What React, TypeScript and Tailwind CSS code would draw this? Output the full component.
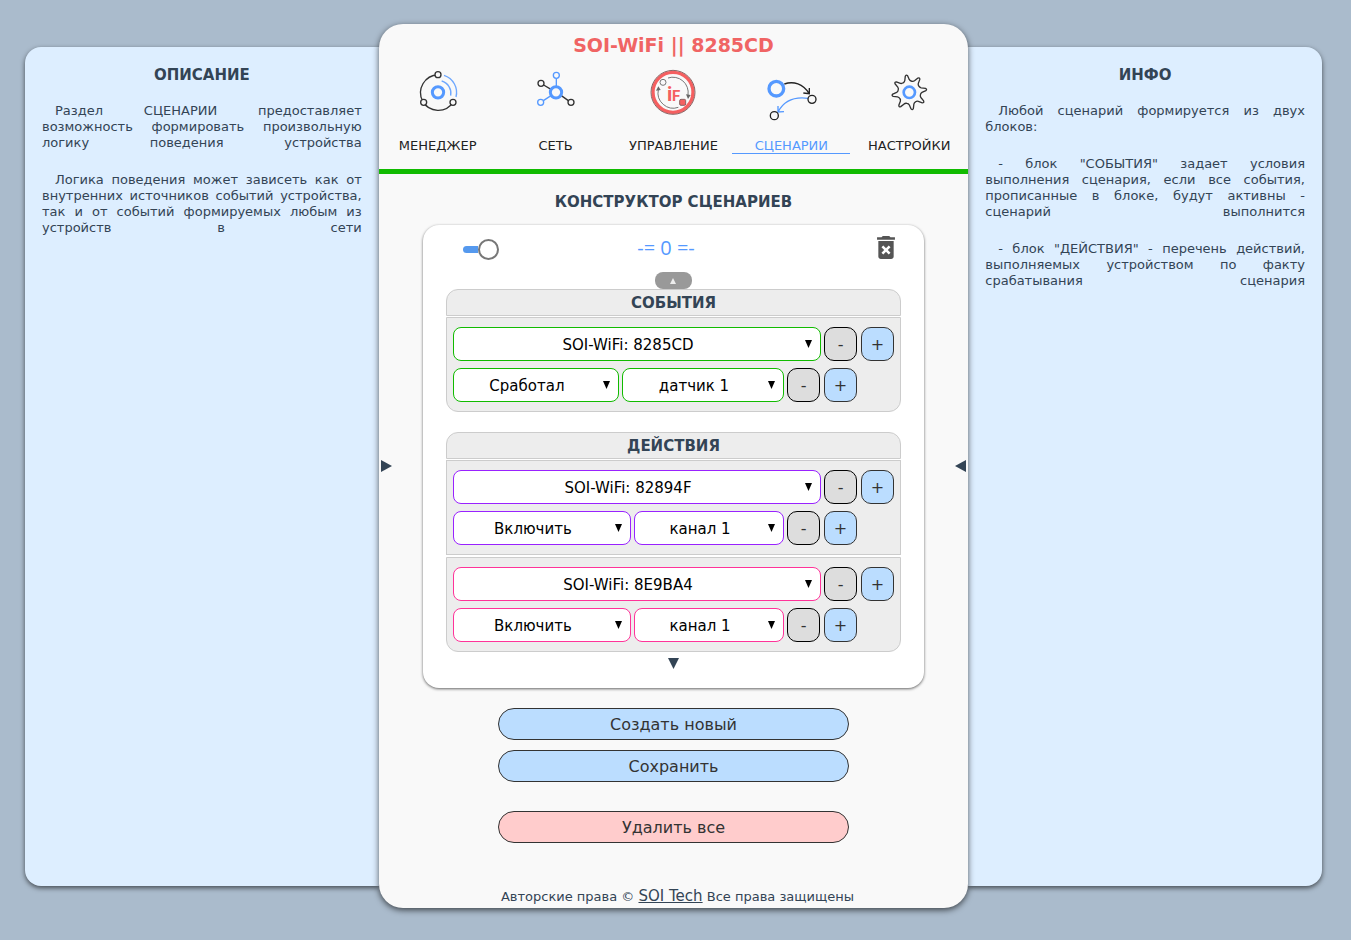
import type { ReactNode } from "react";

const BLUE = "#5599ff";
const INK = "#333333";

function ManagerIcon() {
  return (
    <svg viewBox="0 0 180 180" className="size-[60px]" fill="none" aria-hidden="true">
      <path d="M90 33A53 53 0 1 0 135 115" stroke={INK} strokeWidth="4" />
      <path d="M108 34A54 54 0 0 1 144 99" stroke={BLUE} strokeWidth="4" opacity="0.85" />
      <path d="M101 51A38 38 0 0 1 128 95" stroke={BLUE} strokeWidth="4" opacity="0.85" />
      <g fill="#f9f9f9" stroke={INK} strokeWidth="4">
        <circle cx="90" cy="32" r="9" />
        <circle cx="47" cy="115" r="9" />
        <circle cx="135" cy="115" r="9" />
      </g>
      <circle cx="90" cy="85" r="17" stroke={BLUE} strokeWidth="9" />
    </svg>
  );
}

function NetworkIcon() {
  return (
    <svg viewBox="0 0 180 180" className="size-[60px]" fill="none" aria-hidden="true">
      <path d="M53 63L75 76M106 95L127 110" stroke={INK} strokeWidth="4" />
      <path d="M91 44V66M75 95L52 110" stroke={BLUE} strokeWidth="4" />
      <g strokeWidth="4">
        <circle cx="91" cy="34" r="9" stroke={BLUE} />
        <circle cx="44" cy="115" r="9" stroke={BLUE} />
        <circle cx="45" cy="58" r="9" stroke={INK} />
        <circle cx="135" cy="115" r="9" stroke={INK} />
      </g>
      <circle cx="90" cy="85" r="17" stroke={BLUE} strokeWidth="9" />
    </svg>
  );
}

function ControlIcon() {
  return (
    <svg viewBox="0 0 180 180" className="size-[60px]" fill="none" aria-hidden="true">
      <circle cx="90" cy="85" r="60" stroke="#f55f60" strokeWidth="10" />
      <circle cx="90" cy="85" r="66" stroke="#8a6464" strokeWidth="3" />
      <g stroke="#777777" strokeWidth="3">
        <path d="M75 42A46 46 0 0 1 135 93" />
        <path d="M106 130A46 46 0 0 1 46 77" />
        <circle cx="60" cy="55" r="9" />
      </g>
      <path d="M129 91L143 93L135 105Z" fill="#666666" />
      <path d="M39 80L46 67L53 78Z" fill="#666666" />
      <rect x="110" y="106" width="18" height="18" rx="4" fill="#f55f60" stroke="#8a6464" strokeWidth="3" />
      <g fontFamily="Roboto, sans-serif" fontWeight="700" fill="#f55f60">
        <text x="80" y="110" textAnchor="middle" fontSize="60">
          i
        </text>
        <text x="87" y="110" fontSize="45">
          F
        </text>
      </g>
    </svg>
  );
}

function ScenarioIcon() {
  return (
    <svg viewBox="0 0 180 180" className="size-[60px]" fill="none" aria-hidden="true">
      <path d="M70 60C98 50 126 60 144 88M127 87L145 89L145 72" stroke="#222222" strokeWidth="4" />
      <path d="M141 103C104 98 70 108 51 144M69 143L51 144L51 126" stroke={BLUE} strokeWidth="4" />
      <circle cx="153" cy="106" r="12" stroke="#222222" strokeWidth="4" />
      <circle cx="40" cy="155" r="12" stroke="#222222" strokeWidth="4" />
      <circle cx="46" cy="74" r="22" stroke={BLUE} strokeWidth="10" />
    </svg>
  );
}

function polar(radius: number, degrees: number) {
  const a = (degrees * Math.PI) / 180;
  return `${(91 + radius * Math.cos(a)).toFixed(1)} ${(85 + radius * Math.sin(a)).toFixed(1)}`;
}

const gearPath =
  [0, 1, 2, 3, 4, 5, 6, 7]
    .map((i) => {
      const a = -100 + i * 45;
      return `${i === 0 ? "M" : "L"}${polar(50, a - 4)}Q${polar(55, a)} ${polar(50, a + 4)}L${polar(38, a + 10)}Q${polar(34, a + 14)} ${polar(34, a + 22)}Q${polar(34, a + 30)} ${polar(38, a + 34)}`;
    })
    .join("") + "Z";

function GearIcon() {
  return (
    <svg viewBox="0 0 180 180" className="size-[60px]" fill="none" aria-hidden="true">
      <path d={gearPath} stroke={INK} strokeWidth="4" strokeLinejoin="round" />
      <circle cx="91" cy="85" r="17" stroke={BLUE} strokeWidth="8" />
    </svg>
  );
}

const navItems: { label: string; icon: ReactNode; active?: boolean }[] = [
  { label: "МЕНЕДЖЕР", icon: <ManagerIcon /> },
  { label: "СЕТЬ", icon: <NetworkIcon /> },
  { label: "УПРАВЛЕНИЕ", icon: <ControlIcon /> },
  { label: "СЦЕНАРИИ", icon: <ScenarioIcon />, active: true },
  { label: "НАСТРОЙКИ", icon: <GearIcon /> },
];

function SidePanel({ title, side, paragraphs }: { title: string; side: "left" | "right"; paragraphs: string[] }) {
  return (
    <aside
      className={`mt-[23px] mb-[22px] bg-[#ddeeff] px-[17px] pt-[19px] shadow-[0_2px_5px_rgba(0,0,0,0.6)] ${
        side === "left" ? "rounded-l-2xl" : "rounded-r-2xl"
      }`}
    >
      <h2 className="text-center text-[15px] leading-[18px] font-bold">{title}</h2>
      <div className="mt-[19px] flex flex-col gap-[21px]">
        {paragraphs.map((text) => (
          <p key={text} className="indent-[13px] text-[13px] leading-4 text-justify [text-align-last:justify]">
            {text}
          </p>
        ))}
      </div>
    </aside>
  );
}

function Dropdown({ label, value, tone, grow }: { label: string; value: string; tone: string; grow: string }) {
  return (
    <div className={`grid items-center ${grow}`}>
      <select
        aria-label={label}
        defaultValue={value}
        className={`col-start-1 row-start-1 h-[34px] w-full appearance-none rounded-lg border bg-white pt-[2px] pr-[20px] pl-[2px] text-center text-[15px] text-black [text-align-last:center] ${tone}`}
      >
        <option>{value}</option>
      </select>
      <svg
        viewBox="0 0 7 8"
        className="pointer-events-none col-start-1 row-start-1 mr-[9px] h-2 w-[7px] justify-self-end"
        aria-hidden="true"
      >
        <path d="M0 0H7L3.5 8Z" fill="#000000" />
      </svg>
    </div>
  );
}

function RowButtons() {
  return (
    <div className="flex shrink-0 gap-1">
      <button
        type="button"
        aria-label="Убрать"
        className="h-[34px] w-[33px] rounded-[10px] border border-black bg-[#dddddd] pt-[2px] text-[16px] text-[#333333]"
      >
        -
      </button>
      <button
        type="button"
        aria-label="Добавить"
        className="h-[34px] w-[33px] rounded-[10px] border border-[#333333] bg-[#bbddff] pt-[2px] text-[16px] text-[#333333]"
      >
        +
      </button>
    </div>
  );
}

type Block = {
  device: string;
  verb: string;
  target: string;
  tone: string;
  verbWidth: string;
};

function Group({ title, blocks }: { title: string; blocks: Block[] }) {
  return (
    <section className="text-[15px]">
      <h3 className="mb-px h-[27px] rounded-t-xl border border-[#cccccc] bg-[#ededed] text-center leading-[27px] font-bold">
        {title}
      </h3>
      <div className="flex flex-col gap-[2px]">
        {blocks.map((b) => (
          <div
            key={b.device}
            className="flex flex-col gap-[7px] border border-[#cccccc] bg-[#ededed] px-[6px] py-[9px] last:rounded-b-xl"
          >
            <div className="flex gap-[3px]">
              <Dropdown label="Устройство" value={b.device} tone={b.tone} grow="flex-1" />
              <RowButtons />
            </div>
            <div className="flex gap-[3px] pr-[37px]">
              <Dropdown label="Действие" value={b.verb} tone={b.tone} grow={b.verbWidth} />
              <Dropdown label="Объект" value={b.target} tone={b.tone} grow="flex-1" />
              <RowButtons />
            </div>
          </div>
        ))}
      </div>
    </section>
  );
}

const events: Block[] = [
  { device: "SOI-WiFi: 8285CD", verb: "Сработал", target: "датчик 1", tone: "border-[#11bb00]", verbWidth: "w-[166px]" },
];

const actions: Block[] = [
  { device: "SOI-WiFi: 82894F", verb: "Включить", target: "канал 1", tone: "border-[#9922ff]", verbWidth: "w-[178px]" },
  { device: "SOI-WiFi: 8E9BA4", verb: "Включить", target: "канал 1", tone: "border-[#ff3399]", verbWidth: "w-[178px]" },
];

function ScenarioCard() {
  return (
    <article className="mx-auto mt-[14px] w-[85%] rounded-2xl bg-white shadow-[0_1px_3px_rgba(0,0,0,0.6)]">
      <div className="flex h-[47px] items-center pr-[29px] pl-10">
        <input
          type="checkbox"
          defaultChecked
          aria-label="Сценарий включен"
          className="mt-[2px] flex h-[21px] w-9 appearance-none items-center before:h-[7px] before:w-[15px] before:rounded-l-full before:bg-[#5599ee] before:content-[''] after:size-[21px] after:rounded-full after:border-2 after:border-[#777777] after:bg-white after:content-['']"
        />
        <div className="flex-1 pb-[2px] text-center font-['Open_Sans',sans-serif] text-[20px] text-[#5599ff]">
          -= 0 =-
        </div>
        <button type="button" aria-label="Удалить сценарий" className="flex w-[62px] justify-end pb-[2px]">
          <svg viewBox="5 3 14 18" className="h-[23px] w-[18px]" fill="#555555" aria-hidden="true">
            <path d="M6 19c0 1.1.9 2 2 2h8c1.1 0 2-.9 2-2V7H6v12zm2.46-7.12l1.41-1.41L12 12.59l2.12-2.12 1.41 1.41L13.41 14l2.12 2.12-1.41 1.41L12 15.41l-2.12 2.12-1.41-1.41L10.59 14l-2.13-2.12zM15.5 4l-1-1h-5l-1 1H5v2h14V4z" />
          </svg>
        </button>
      </div>
      <div className="flex flex-col px-[23px]">
        <button
          type="button"
          aria-label="Свернуть"
          className="flex h-[17px] w-[37px] items-center justify-center self-center rounded-lg bg-[#999999]"
        >
          <svg viewBox="0 0 6 6" className="size-[6px]" fill="#eeeeee" aria-hidden="true">
            <path d="M3 0L6 6H0Z" />
          </svg>
        </button>
        <Group title="СОБЫТИЯ" blocks={events} />
        <div className="mt-5">
          <Group title="ДЕЙСТВИЯ" blocks={actions} />
        </div>
        <button type="button" aria-label="Развернуть" className="flex h-9 items-start justify-center pt-[6px]">
          <svg viewBox="0 0 11 11" className="size-[11px]" fill="#334455" aria-hidden="true">
            <path d="M0 0H11L5.5 11Z" />
          </svg>
        </button>
      </div>
    </article>
  );
}

export default function App() {
  return (
    <div className="min-h-screen bg-[#aabbcc] pt-6 pr-[29px] pb-8 pl-[25px] font-['DejaVu_Sans',sans-serif] text-[#334455]">
      <div className="grid grid-cols-[3fr_5fr_3fr]">
        <SidePanel
          side="left"
          title="ОПИСАНИЕ"
          paragraphs={[
            "Раздел СЦЕНАРИИ предоставляет возможность формировать произвольную логику поведения устройства",
            "Логика поведения может зависеть как от внутренних источников событий устройства, так и от событий формируемых любым из устройств в сети",
          ]}
        />

        <main className="relative rounded-3xl bg-[#f9f9f9] pt-[11px] shadow-[0_2px_6px_rgba(0,0,0,0.65)]">
          <h1 className="text-center text-[19px] leading-5 font-bold text-[#f06464]">SOI-WiFi || 8285CD</h1>
          <nav className="mt-[9px] grid grid-cols-5 border-b-5 border-[#11bb00] pb-[15px]">
            {navItems.map((item) => (
              <a
                key={item.label}
                href="#"
                className={`flex flex-col items-center gap-[14px] border-b text-[13px] leading-[15px] ${
                  item.active ? "border-[#5599ff] text-[#5599ff]" : "border-transparent text-[#222222]"
                }`}
              >
                {item.icon}
                {item.label}
              </a>
            ))}
          </nav>

          <h2 className="mt-[19px] text-center text-[15px] leading-[18px] font-bold">КОНСТРУКТОР СЦЕНАРИЕВ</h2>
          <ScenarioCard />

          <div className="mx-auto mt-5 flex w-[351px] max-w-full flex-col gap-[10px] text-[#333333]">
            <button type="button" className="h-8 rounded-full border border-[#333333] bg-[#bbddff] pt-[2px] text-[16px]">
              Создать новый
            </button>
            <button type="button" className="h-8 rounded-full border border-[#333333] bg-[#bbddff] pt-[2px] text-[16px]">
              Сохранить
            </button>
            <button
              type="button"
              className="mt-[19px] h-8 rounded-full border border-[#333333] bg-[#ffcccc] pt-[2px] text-[16px]"
            >
              Удалить все
            </button>
          </div>

          <footer className="mt-[43px] pb-px pl-2 text-center text-[13px] leading-5">
            Авторские права ©{" "}
            <a href="#" className="text-[15px] underline">
              SOI Tech
            </a>{" "}
            Все права защищены
          </footer>

          <button type="button" aria-label="Описание" className="absolute top-1/2 left-[2px] -mt-[6px]">
            <svg viewBox="0 0 11 12" className="h-3 w-[11px]" fill="#334455" aria-hidden="true">
              <path d="M0 0V12L11 6Z" />
            </svg>
          </button>
          <button type="button" aria-label="Инфо" className="absolute top-1/2 right-[2px] -mt-[6px]">
            <svg viewBox="0 0 11 12" className="h-3 w-[11px]" fill="#334455" aria-hidden="true">
              <path d="M11 0V12L0 6Z" />
            </svg>
          </button>
        </main>

        <SidePanel
          side="right"
          title="ИНФО"
          paragraphs={[
            "Любой сценарий формируется из двух блоков:",
            "- блок \"СОБЫТИЯ\" задает условия выполнения сценария, если все события, прописанные в блоке, будут активны - сценарий выполнится",
            "- блок \"ДЕЙСТВИЯ\" - перечень действий, выполняемых устройством по факту срабатывания сценария",
          ]}
        />
      </div>
    </div>
  );
}
